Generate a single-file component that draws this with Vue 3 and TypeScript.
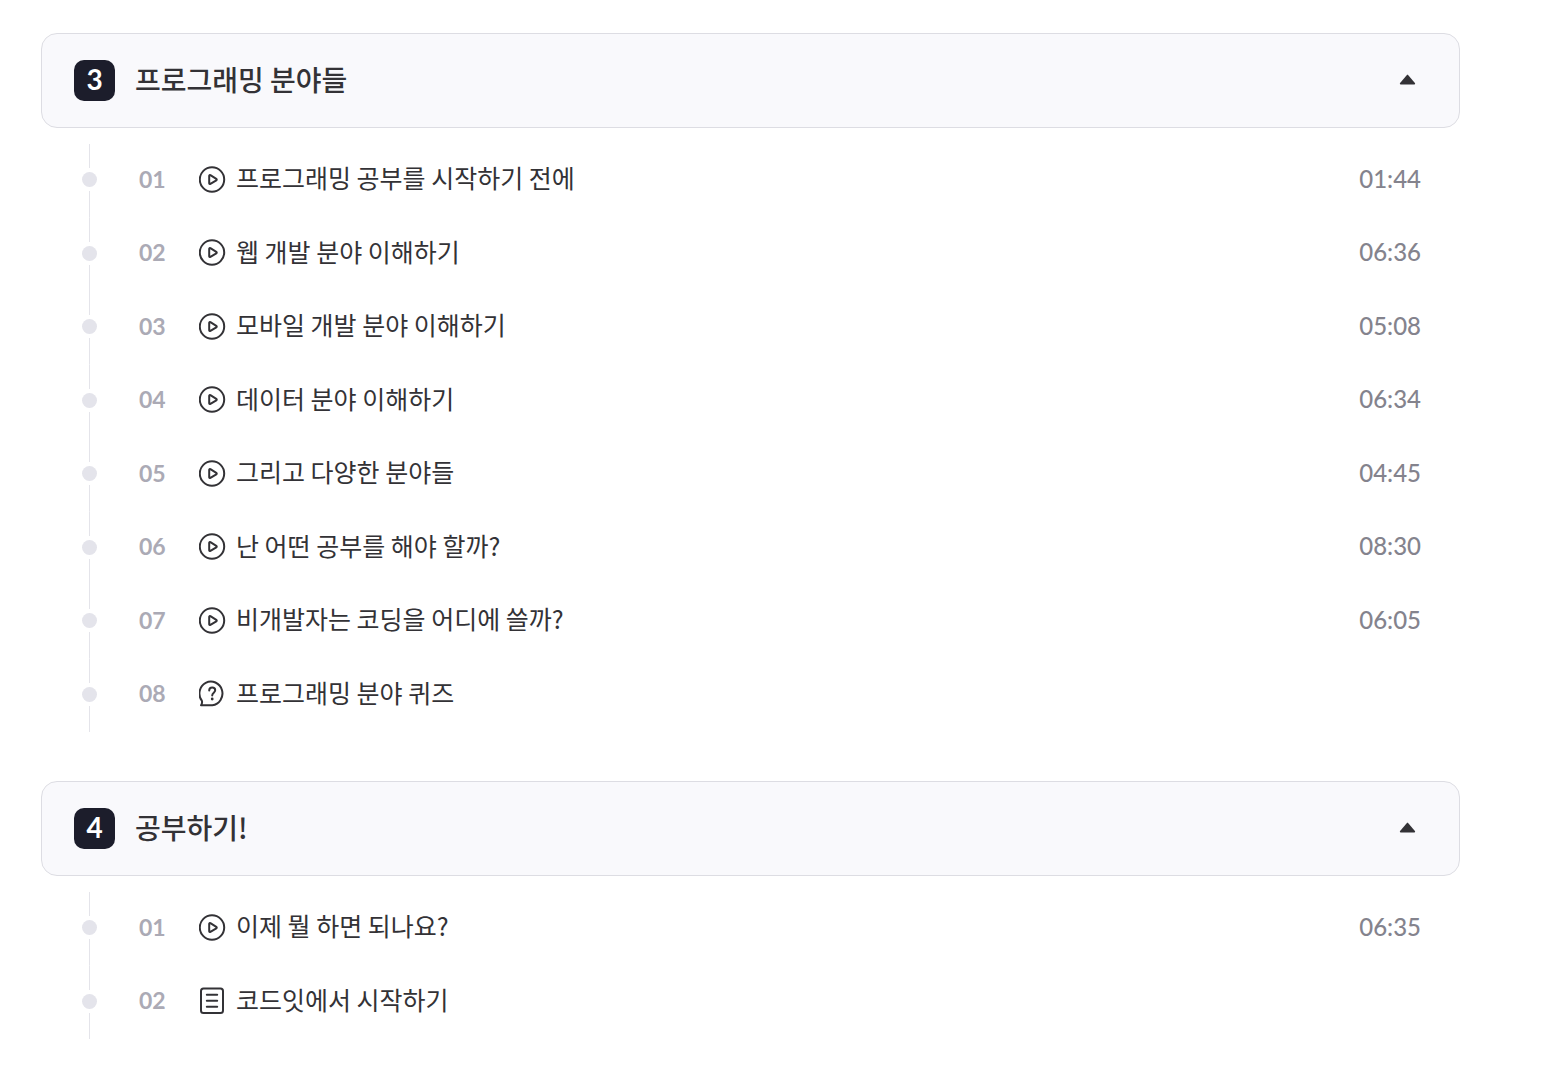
<script setup lang="ts">
import { ref } from 'vue'

type LessonKind = 'video' | 'quiz' | 'note'

interface Lesson {
  title: string
  kind: LessonKind
  time?: string
}

interface Chapter {
  no: number
  title: string
  lessons: Lesson[]
}

const chapters: Chapter[] = [
  {
    no: 3,
    title: '프로그래밍 분야들',
    lessons: [
      { title: '프로그래밍 공부를 시작하기 전에', kind: 'video', time: '01:44' },
      { title: '웹 개발 분야 이해하기', kind: 'video', time: '06:36' },
      { title: '모바일 개발 분야 이해하기', kind: 'video', time: '05:08' },
      { title: '데이터 분야 이해하기', kind: 'video', time: '06:34' },
      { title: '그리고 다양한 분야들', kind: 'video', time: '04:45' },
      { title: '난 어떤 공부를 해야 할까?', kind: 'video', time: '08:30' },
      { title: '비개발자는 코딩을 어디에 쓸까?', kind: 'video', time: '06:05' },
      { title: '프로그래밍 분야 퀴즈', kind: 'quiz' },
    ],
  },
  {
    no: 4,
    title: '공부하기!',
    lessons: [
      { title: '이제 뭘 하면 되나요?', kind: 'video', time: '06:35' },
      { title: '코드잇에서 시작하기', kind: 'note' },
    ],
  },
]

const closed = ref<number[]>([])

const isOpen = (no: number) => !closed.value.includes(no)

function toggle(no: number) {
  closed.value = isOpen(no) ? [...closed.value, no] : closed.value.filter((n) => n !== no)
}

const pad = (n: number) => String(n).padStart(2, '0')
</script>

<template>
  <main class="curriculum">
    <section v-for="chapter in chapters" :key="chapter.no" class="chapter">
      <h2 class="heading">
        <button class="toggle" type="button" :aria-expanded="isOpen(chapter.no)" @click="toggle(chapter.no)">
          <span class="badge">{{ chapter.no }}</span>
          <span class="chapter-title">{{ chapter.title }}</span>
          <svg class="caret" :class="{ down: !isOpen(chapter.no) }" viewBox="0 0 24 24" aria-hidden="true">
            <path d="M10.700 6.200 4.100 14c-.5.700-.2 1.400.6 1.400h13.600c.8 0 1.100-.7.600-1.400L12.300 6.200c-.5-.5-1.100-.5-1.600 0z" />
          </svg>
        </button>
      </h2>
      <ol v-if="isOpen(chapter.no)" class="lessons">
        <li v-for="(lesson, i) in chapter.lessons" :key="lesson.title">
          <a class="lesson" href="#">
            <span class="rail"><span class="dot"></span></span>
            <span class="index">{{ pad(i + 1) }}</span>
            <svg class="icon" viewBox="0 0 28 28" aria-hidden="true">
              <template v-if="lesson.kind === 'video'">
                <circle cx="13" cy="14.500" r="12.200" />
                <path d="M10.200 10.800v7.400c0 .7.6 1 1.200.7l5.900-3.600c.6-.4.6-1.100 0-1.500l-5.900-3.700c-.6-.3-1.200 0-1.200.7z" />
              </template>
              <template v-else-if="lesson.kind === 'quiz'">
                <path d="M2 26.300c1.100-1.500 1.400-2.900.8-4.600A11.500 11.900 0 1 1 13.300 26.300z" />
                <path d="M10.200 11.500c0-1.800 1.200-3 3-3s3 1.100 3 2.700c0 2.400-3 2.500-3 5.200" />
                <circle class="solid" cx="13.200" cy="20" r="1.400" />
              </template>
              <template v-else>
                <rect x="2" y="2.500" width="22" height="24.400" rx="2.500" />
                <path d="M7.800 8.700h10.400M7.800 14.700h10.400M7.800 20.700h10.400" />
              </template>
            </svg>
            <span class="title">{{ lesson.title }}</span>
            <time v-if="lesson.time" class="time">{{ lesson.time }}</time>
          </a>
        </li>
      </ol>
    </section>
  </main>
</template>

<style>
body {
  margin: 0;
  background: #fff;
}
</style>

<style scoped>
.curriculum {
  box-sizing: border-box;
  padding: 33px 88px 45px 41px;
  display: flex;
  flex-direction: column;
  gap: 49px;
  color: #333236;
  font-family: 'Noto Sans CJK KR', sans-serif;
}

.heading {
  margin: 0;
}

.toggle {
  box-sizing: border-box;
  width: 100%;
  display: flex;
  align-items: center;
  gap: 20px;
  padding: 26px 39px 26px 32px;
  border: 1px solid #dddde3;
  border-radius: 16px;
  background: #f9f9fc;
  color: inherit;
  font: inherit;
  text-align: left;
  cursor: pointer;
}

.badge {
  flex: none;
  width: 41px;
  height: 41px;
  border-radius: 10px;
  background: #1c1d2b;
  color: #fff;
  font-family: Lato, sans-serif;
  font-size: 28px;
  font-weight: 700;
  line-height: 39px;
  text-align: center;
}

.chapter-title {
  flex: 1;
  padding-bottom: 4px;
  font-size: 28px;
  font-weight: 500;
  line-height: 36px;
}

.caret {
  flex: none;
  width: 24px;
  height: 24px;
  fill: #333236;
}

.caret.down {
  transform: rotate(180deg);
}

.lessons {
  list-style: none;
  margin: 16px 0 0;
  padding: 0;
}

.lesson {
  display: flex;
  align-items: center;
  padding: 15px 39px 19px 41px;
  color: inherit;
  font-size: 25px;
  line-height: 1.5;
  text-decoration: none;
}

/* The rail reaches past the row padding, so that the rows share one line. */
.rail {
  flex: none;
  align-self: stretch;
  width: 15px;
  margin: -15px 42px -19px 0;
  padding: 15px 0 17px;
  display: flex;
  align-items: center;
  background: linear-gradient(#e4e4ea, #e4e4ea) center / 1px 100% no-repeat;
}

.dot {
  width: 15px;
  height: 15px;
  border-radius: 50%;
  background: #e4e4eb;
  box-shadow: 0 0 0 4px #fff;
}

.index {
  flex: none;
  width: 60px;
  color: #abaab5;
  font-family: Lato, sans-serif;
  font-size: 23px;
  font-weight: 700;
}

.icon {
  flex: none;
  width: 28px;
  height: 28px;
  margin-right: 9px;
  fill: none;
  stroke: #333236;
  stroke-width: 2;
  stroke-linecap: round;
  stroke-linejoin: round;
}

.icon .solid {
  fill: #333236;
  stroke: none;
}

.title {
  flex: 1;
  padding-bottom: 2px;
}

.time {
  color: #84838d;
  font-family: Lato, sans-serif;
  font-size: 24px;
  font-weight: 500;
}
</style>
